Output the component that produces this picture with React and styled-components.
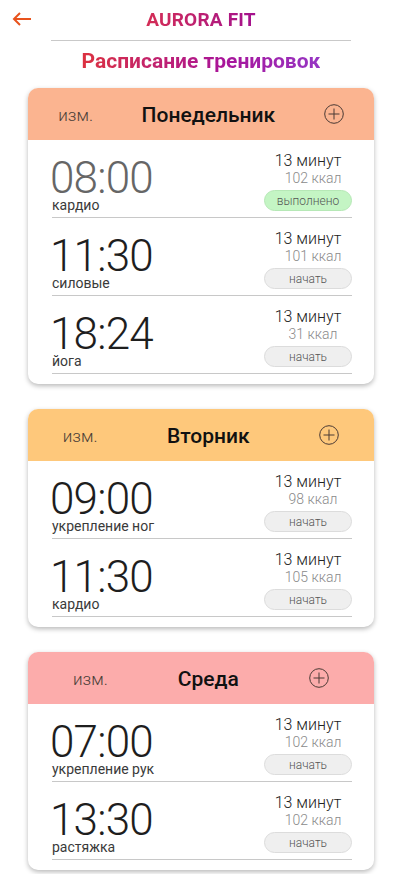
import React from 'react';
import styled, { createGlobalStyle } from 'styled-components';

const GlobalStyle = createGlobalStyle`
  body {
    margin: 0;
    background: #fff;
    font-family: Roboto, "Liberation Sans", sans-serif;
  }
`;

const Page = styled.div`
  width: 402px;
  padding-bottom: 30px;
`;

const TopBar = styled.div`
  display: grid;
  grid-template-columns: 44px 1fr 44px;
  align-items: center;
  height: 36px;
`;

const BackButton = styled.div`
  display: flex;
  align-items: center;
  padding-left: 12px;
  padding-top: 1px;
  cursor: pointer;
`;

const Brand = styled.div`
  text-align: center;
  font-size: 19px;
  font-weight: 700;
  letter-spacing: 0.2px;
  background: linear-gradient(90deg, #d42d55, #a3128f);
  -webkit-background-clip: text;
  background-clip: text;
  color: transparent;
  width: max-content;
  justify-self: center;
  padding-top: 2px;
`;

const Divider = styled.div`
  width: 300px;
  height: 1px;
  background: #c9c9c9;
  margin: 4px auto 0;
`;

const Heading = styled.h1`
  margin: 7px auto 0;
  width: max-content;
  font-size: 21px;
  font-weight: 700;
  line-height: 26px;
  background: linear-gradient(90deg, #dc3140, #a8149a 60%, #9636c4);
  -webkit-background-clip: text;
  background-clip: text;
  color: transparent;
`;

const Days = styled.div`
  display: flex;
  flex-direction: column;
  gap: 25px;
  padding: 14px 28px 0;
`;

const Card = styled.section`
  background: #fff;
  border-radius: 10px;
  box-shadow: 0 2px 5px rgba(0, 0, 0, 0.28);
  overflow: hidden;
  padding-bottom: 10px;
`;

const CardHeader = styled.div`
  display: flex;
  align-items: center;
  justify-content: space-around;
  height: 52px;
  padding: 0 ${(p) => p.$pad}px;
  background: ${(p) => p.$color};
`;

const Edit = styled.span`
  font-size: 17px;
  font-weight: 300;
  color: #4a3e38;
  padding-top: 2px;
`;

const DayTitle = styled.h2`
  margin: 0;
  font-size: 21px;
  font-weight: 500;
  color: #111;
  padding-top: 2px;
`;

const AddButton = styled.div`
  width: 20px;
  height: 20px;
  display: flex;
  cursor: pointer;
`;

const Row = styled.div`
  display: flex;
  justify-content: space-between;
  align-items: flex-start;
  margin: 0 22px 0 24px;
  padding: 12px 0 5px;
  border-bottom: 1px solid #c8c8c8;

  &:first-child {
    padding-top: 4px;
  }
`;

const Left = styled.div`
  display: flex;
  flex-direction: column;
  padding-top: 6px;
`;

const Time = styled.div`
  font-size: 44px;
  font-weight: 300;
  line-height: 40px;
  letter-spacing: -0.8px;
  color: ${(p) => (p.$done ? '#666' : '#1e1e1e')};
  margin-left: -2px;
`;

const Kind = styled.div`
  font-size: 14px;
  line-height: 14px;
  color: #3a3a3a;
`;

const Right = styled.div`
  width: 88px;
  display: flex;
  flex-direction: column;
  align-items: center;
`;

const Minutes = styled.div`
  font-size: 16px;
  font-weight: 300;
  line-height: 18px;
  color: #222;
`;

const Kcal = styled.div`
  font-size: 14px;
  font-weight: 300;
  line-height: 16px;
  color: #8a8a8a;
  padding-left: 10px;
`;

const Action = styled.button`
  margin-top: 4px;
  width: 88px;
  height: 21px;
  border-radius: 11px;
  border: 1px solid ${(p) => (p.$done ? '#b6e8b6' : '#dcdcdc')};
  background: ${(p) => (p.$done ? '#c4f5c4' : '#efefef')};
  color: #555;
  font-family: inherit;
  font-size: 12px;
  font-weight: 300;
  padding: 0;
  cursor: pointer;
`;

const ArrowIcon = () => (
  <svg width="20" height="14" viewBox="0 0 20 14">
    <path d="M19 7H2M8 1L2 7l6 6" fill="none" stroke="#e8531d" strokeWidth="2" />
  </svg>
);

const PlusIcon = () => (
  <svg width="20" height="20" viewBox="0 0 20 20">
    <circle cx="10" cy="10" r="9.3" fill="none" stroke="#4a3a34" strokeWidth="1" />
    <path d="M10 4.5v11M4.5 10h11" stroke="#4a3a34" strokeWidth="1" />
  </svg>
);

const schedule = [
  {
    day: 'Понедельник',
    color: '#fbb490',
    pad: 6,
    items: [
      { time: '08:00', kind: 'кардио', kcal: 102, done: true },
      { time: '11:30', kind: 'силовые', kcal: 101 },
      { time: '18:24', kind: 'йога', kcal: 31 },
    ],
  },
  {
    day: 'Вторник',
    color: '#fec87b',
    pad: 0,
    items: [
      { time: '09:00', kind: 'укрепление ног', kcal: 98 },
      { time: '11:30', kind: 'кардио', kcal: 105 },
    ],
  },
  {
    day: 'Среда',
    color: '#fcacab',
    pad: 10,
    items: [
      { time: '07:00', kind: 'укрепление рук', kcal: 102 },
      { time: '13:30', kind: 'растяжка', kcal: 102 },
    ],
  },
];

const App = () => (
  <Page>
    <GlobalStyle />
    <TopBar>
      <BackButton>
        <ArrowIcon />
      </BackButton>
      <Brand>AURORA FIT</Brand>
      <span />
    </TopBar>
    <Divider />
    <Heading>Расписание тренировок</Heading>
    <Days>
      {schedule.map((d) => (
        <Card key={d.day}>
          <CardHeader $color={d.color} $pad={d.pad}>
            <Edit>изм.</Edit>
            <DayTitle>{d.day}</DayTitle>
            <AddButton>
              <PlusIcon />
            </AddButton>
          </CardHeader>
          {d.items.map((it) => (
            <Row key={it.time}>
              <Left>
                <Time $done={it.done}>{it.time}</Time>
                <Kind>{it.kind}</Kind>
              </Left>
              <Right>
                <Minutes>13 минут</Minutes>
                <Kcal>{it.kcal} ккал</Kcal>
                <Action $done={it.done}>{it.done ? 'выполнено' : 'начать'}</Action>
              </Right>
            </Row>
          ))}
        </Card>
      ))}
    </Days>
  </Page>
);

export default App;
